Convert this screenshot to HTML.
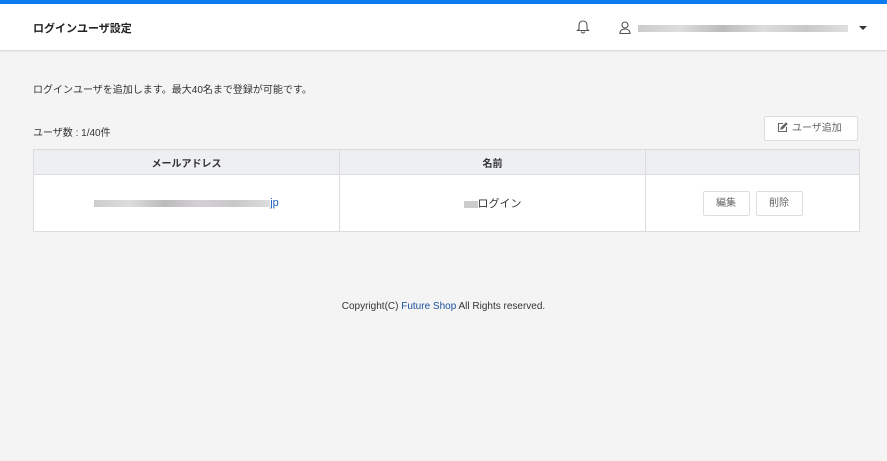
<!DOCTYPE html>
<html><head><meta charset="utf-8">
<style>
*{margin:0;padding:0;box-sizing:border-box}
body{width:887px;height:461px;background:#f4f4f4;font-family:"Liberation Sans","Noto Sans CJK JP",sans-serif;color:#333;position:relative;overflow:hidden;font-size:10px}
.top{position:absolute;left:0;top:0;width:887px;height:4px;background:#0a7cf0}
.hdr{position:absolute;left:0;top:4px;width:887px;height:46px;background:#fff;box-shadow:0 1px 2px rgba(0,0,0,.15)}
.title{position:absolute;left:33px;top:16px;font-size:11px;font-weight:bold;color:#222}
.blur{position:absolute;height:7px;background:linear-gradient(90deg,#ccc,#ddd 20%,#bbb 40%,#ddd 60%,#c8c8c8 80%,#e0e0e0)}
.abs{position:absolute}
table{position:absolute;left:33px;top:149px;width:827px;border-collapse:collapse;background:#fff}
td,th{border:1px solid #dcdcdc;text-align:center}
th{background:#eeeff2;height:25px;font-size:10px;font-weight:bold;color:#333}
td{height:57px;font-size:11px}
.btn{display:inline-block;border:1px solid #ddd;background:#fff;border-radius:2px;width:47px;height:25px;line-height:23px;font-size:10px;color:#666;margin:0 3px;vertical-align:middle}
</style></head><body>
<div class="top"></div>
<div class="hdr">
<div class="title">ログインユーザ設定</div>
<svg class="abs" style="left:576px;top:14px" width="14" height="16" viewBox="0 0 14 16" fill="none" stroke="#555" stroke-width="1.1"><path d="M3 11V7a4 4 0 0 1 8 0v4l1.5 1.5h-11z M5.5 13.5a1.5 1.5 0 0 0 3 0"/></svg>
<svg class="abs" style="left:619px;top:17px" width="12" height="13" viewBox="0 0 12 13" fill="none" stroke="#555" stroke-width="1.1"><circle cx="6" cy="4" r="3"/><path d="M1 12.5c0-3 2-4.5 5-4.5s5 1.5 5 4.5z"/></svg>
<div class="blur" style="left:638px;top:21px;width:210px"></div>
<svg class="abs" style="left:859px;top:21px" width="8" height="6"><path d="M0 1h8l-4 4z" fill="#333"/></svg>
</div>
<div class="abs" style="left:33px;top:81px">ログインユーザを追加します。最大40名まで登録が可能です。</div>
<div class="abs" style="left:33px;top:124px">ユーザ数 : 1/40件</div>
<div class="abs" style="left:764px;top:116px;width:94px;height:25px;background:#fff;border:1px solid #ddd;border-radius:2px;font-size:10px;color:#666;line-height:23px;padding-left:12px">
<svg style="vertical-align:-2px;margin-right:4px" width="11" height="11" viewBox="0 0 11 11" fill="none" stroke="#666" stroke-width="1.1"><path d="M6 1.5H1.5v8h8V5"/><path d="M4 7l.3-1.5L9 1l1 1-4.5 4.7z" fill="#666"/></svg>ユーザ追加</div>
<table>
<tr><th style="width:306px">メールアドレス</th><th style="width:306px">名前</th><th></th></tr>
<tr><td><span style="display:inline-block;width:176px;height:7px;vertical-align:middle;background:linear-gradient(90deg,#ccc,#ddd 20%,#bbb 40%,#d5cfd5 60%,#c8c8c8 80%,#ddd)"></span><span style="color:#1a5fb4">jp</span></td>
<td><span style="display:inline-block;width:14px;height:7px;vertical-align:middle;background:#ccc"></span>ログイン</td>
<td><span class="btn">編集</span><span class="btn">削除</span></td></tr>
</table>
<div class="abs" style="left:0;width:887px;top:301px;text-align:center;font-size:10px;color:#333">Copyright(C) <span style="color:#1a4f9c">Future Shop</span> All Rights reserved.</div>
</body></html>
